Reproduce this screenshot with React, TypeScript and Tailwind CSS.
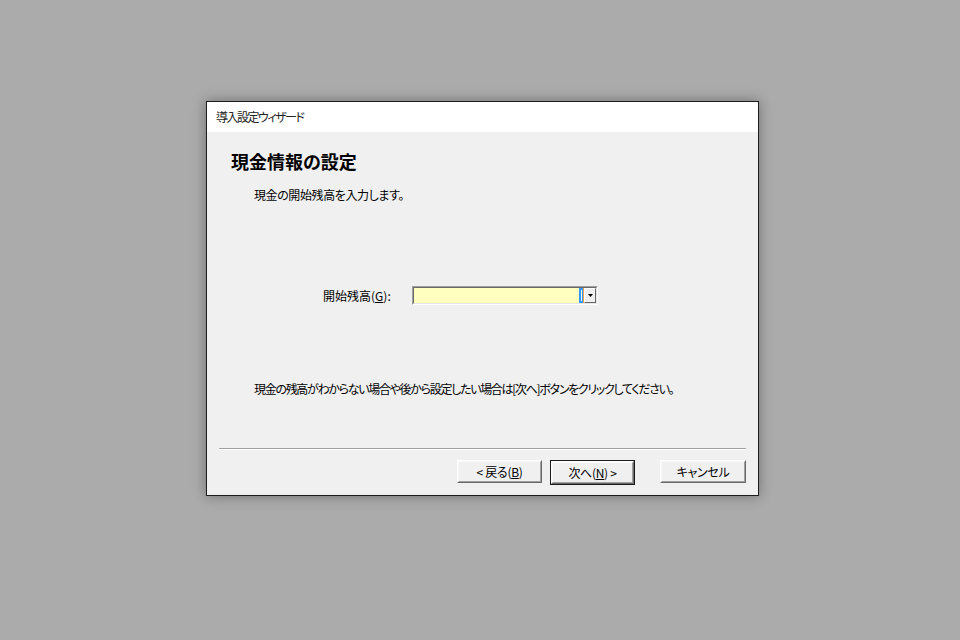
const jp = "font-['MS_UI_Gothic','Noto_Sans_CJK_JP',sans-serif] [font-feature-settings:'palt']";

function WinButton({ children, isDefault, w }: { children: React.ReactNode; isDefault?: boolean; w: string }) {
  return (
    <div className={isDefault ? 'border border-[#1a1a1a]' : ''}>
      <div className="border border-t-white border-l-white border-r-[#696969] border-b-[#696969]">
        <div
          className={`flex h-[21px] items-center justify-center border border-t-[#f8f8f8] border-l-[#f8f8f8] border-r-[#a0a0a0] border-b-[#a0a0a0] bg-[#f0f0f0] text-[12px] tracking-[-0.3px] text-black ${w}`}
        >
          {children}
        </div>
      </div>
    </div>
  );
}

export default function App() {
  return (
    <div className={`h-[640px] w-[960px] bg-[#ababab] pl-[206px] pt-[101px] ${jp}`}>
      <div className="flex h-[395px] w-[553px] flex-col border border-[#1c1c1c] bg-[#f0f0f0] shadow-[0_0_12px_rgba(0,0,0,0.35)]">
        {/* title bar */}
        <div className="flex h-[30px] items-center bg-white pl-[9px] text-[12px] tracking-[-1.5px] text-[#222]">
          導入設定ウィザード
        </div>

        <div className="flex flex-1 flex-col">
          <h1 className="pl-[24px] pt-[18px] text-[18px] font-bold leading-[22px] text-black">現金情報の設定</h1>
          <p className="pl-[47px] pt-[15px] text-[12px] leading-[16px] tracking-[-0.4px] text-black">
            現金の開始残高を入力します。
          </p>

          <div className="flex items-center pl-[116px] pt-[83px]">
            <span className="w-[89px] text-[12px] text-black">
              開始残高(<span className="underline">G</span>):
            </span>
            <div className="border border-t-[#a0a0a0] border-l-[#a0a0a0] border-b-white border-r-white">
              <div className="flex h-[17px] w-[184px] items-center border border-t-[#696969] border-l-[#696969] border-b-[#e3e3e3] border-r-[#e3e3e3] bg-[#ffffc0]">
                <div className="flex-1" />
                <div className="flex h-[15px] w-[4px] items-center justify-center bg-[#3399ff]">
                  <div className="h-[11px] w-[1px] bg-white" />
                </div>
                <div className="h-[15px] w-[1px] bg-[#f7a440]" />
                <div className="flex h-[15px] w-[12px] items-center justify-center border border-t-white border-l-white border-r-[#696969] border-b-[#696969] bg-[#f0f0f0]">
                  <svg width="5" height="3" viewBox="0 0 5 3">
                    <path d="M0 0h5L2.5 3z" fill="#000" />
                  </svg>
                </div>
              </div>
            </div>
          </div>

          <p className="pl-[47px] pt-[76px] text-[12px] leading-[16px] tracking-[-1.3px] text-black">
            現金の残高がわからない場合や後から設定したい場合は[次へ]ボタンをクリックしてください。
          </p>

          <div className="mx-[12px] mt-[51px] border-t border-b border-t-[#a0a0a0] border-b-white" />

          <div className="flex justify-end pr-[12px] pt-[10px]">
            <WinButton w="w-[83px]">
              &lt;&nbsp;戻る(<span className="underline">B</span>)
            </WinButton>
            <div className="pl-[8px]">
              <WinButton isDefault w="w-[81px]">
                次へ(<span className="underline">N</span>)&nbsp;&gt;
              </WinButton>
            </div>
            <div className="pl-[25px]">
              <WinButton w="w-[84px]">キャンセル</WinButton>
            </div>
          </div>
        </div>
      </div>
    </div>
  );
}
